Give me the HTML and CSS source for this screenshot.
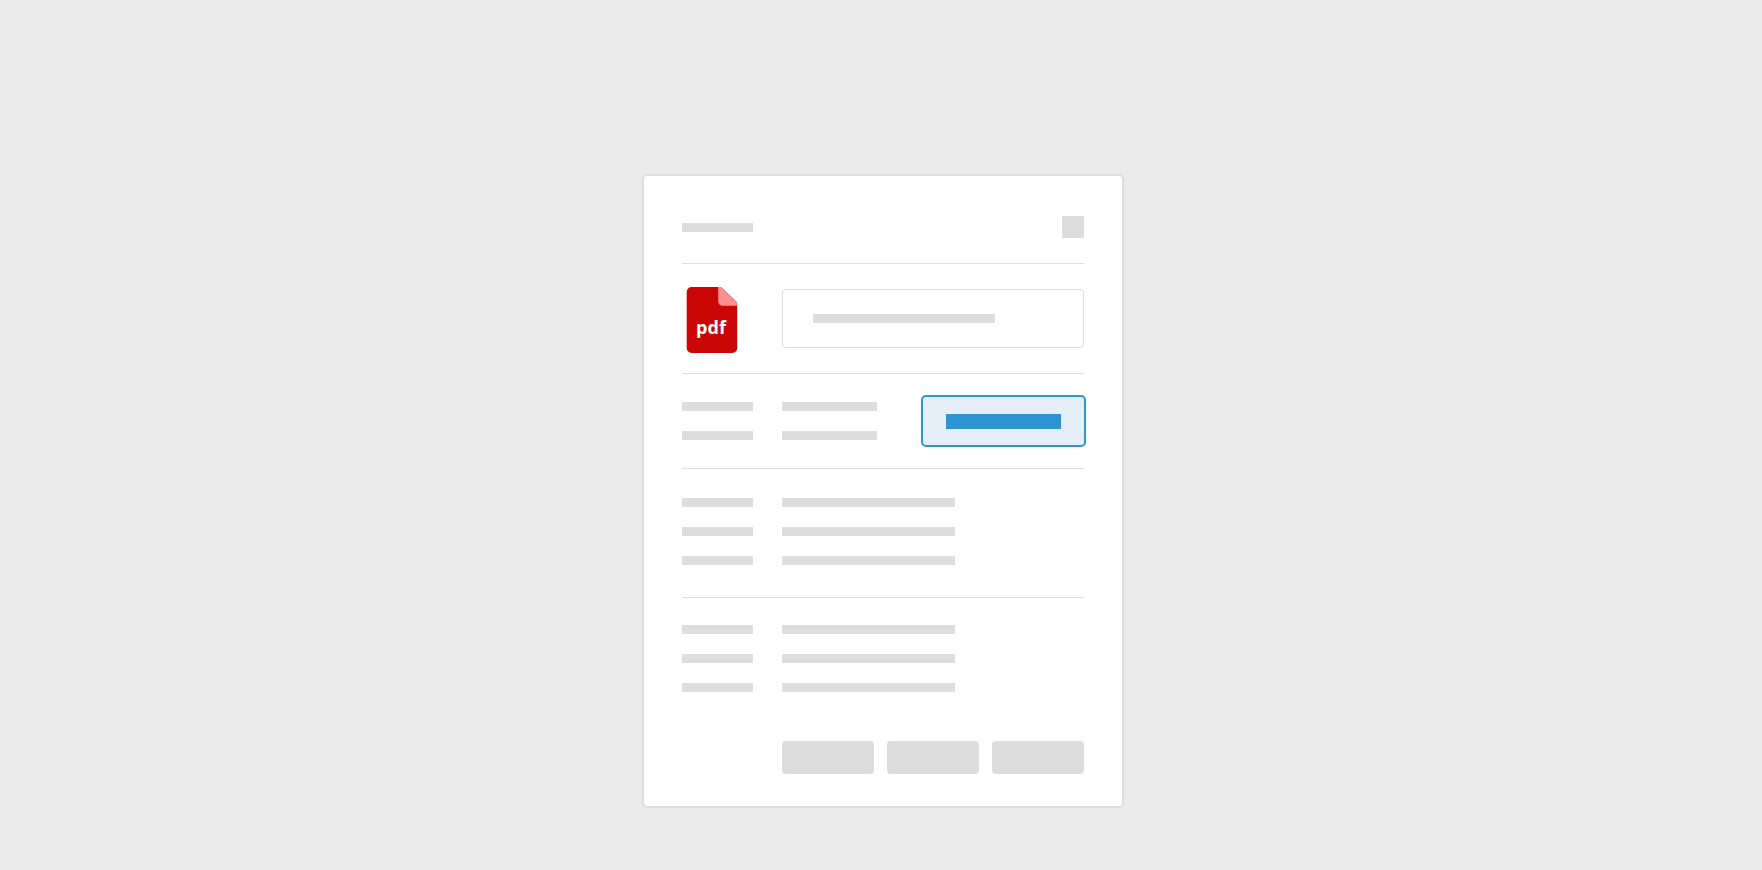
FILE: index.html
```html
<!DOCTYPE html>
<html lang="en">
<head>
<meta charset="utf-8">
<meta name="viewport" content="width=device-width, initial-scale=1">
<title>Document form</title>
<link rel="stylesheet" href="styles.css">
</head>
<body>
<main class="card">
  <header class="card-header">
    <span class="bar bar-label"></span>
    <button class="square" type="button" aria-label="Close"></button>
  </header>
  <section class="row file-row">
    <svg class="file-icon" viewBox="0 0 52 66" role="img" aria-label="pdf file">
      <path fill="#cb0606" d="M5.500 0H35L51.200 15.800V61a5 5 0 0 1-5 5H5.700a5 5 0 0 1-5-5V5A5 5 0 0 1 5.700 0Z"/>
      <path fill="#ff8e8e" d="M32.200 0H35L51.200 15.800V18.800H36.700A4.500 4.500 0 0 1 32.200 14.300Z"/>
      <path fill="none" stroke="#b98a8a" stroke-width=".8" d="M35 0 51.200 15.800"/>
      <text class="file-type" x="25" y="47" text-anchor="middle">pdf</text>
    </svg>
    <input class="field" type="text" aria-label="File name">
  </section>
  <section class="row action-row">
    <div class="bars">
      <span class="bar bar-label"></span><span class="bar bar-short"></span>
      <span class="bar bar-label"></span><span class="bar bar-short"></span>
    </div>
    <button class="primary" type="button" aria-label="Primary action"><span class="primary-bar"></span></button>
  </section>
  <section class="row details-row">
    <div class="bars">
      <span class="bar bar-label"></span><span class="bar bar-long"></span>
      <span class="bar bar-label"></span><span class="bar bar-long"></span>
      <span class="bar bar-label"></span><span class="bar bar-long"></span>
    </div>
  </section>
  <section class="row extra-row">
    <div class="bars">
      <span class="bar bar-label"></span><span class="bar bar-long"></span>
      <span class="bar bar-label"></span><span class="bar bar-long"></span>
      <span class="bar bar-label"></span><span class="bar bar-long"></span>
    </div>
  </section>
  <footer class="buttons">
    <button class="secondary" type="button" aria-label="First option"></button>
    <button class="secondary" type="button" aria-label="Second option"></button>
    <button class="secondary" type="button" aria-label="Third option"></button>
  </footer>
</main>
</body>
</html>
```

FILE: styles.css
```css
* {
  box-sizing: border-box;
}

body {
  margin: 0;
  min-height: 100vh;
  padding: 174px 0 62px 4px;
  background: #eaeaea;
  font-family: "Open Sans", "Noto Sans", sans-serif;
}

button,
input {
  margin: 0;
  padding: 0;
  border: 0;
  font: inherit;
}

.card {
  width: 100%;
  max-width: 482px;
  margin: 0 auto;
  padding: 40px 38px 32px;
  background: #fff;
  border: 2px solid #ddd;
  border-radius: 5px;
}

.card-header {
  display: flex;
  align-items: center;
  justify-content: space-between;
  padding-bottom: 25px;
}

.bar {
  height: 9px;
  background: #ddd;
}

.bar-label {
  width: 71px;
}

.bar-short {
  width: 95px;
}

.bar-long {
  width: 173px;
}

.square {
  width: 22px;
  height: 22px;
  background: #ddd;
}

.row {
  display: flex;
  align-items: flex-start;
  justify-content: space-between;
  border-top: 1px solid #ddd;
}

.bars {
  display: grid;
  grid-template-columns: 71px auto;
  gap: 20px 29px;
}

.file-row {
  gap: 44px;
  padding: 23px 0 20px 4px;
}

.file-icon {
  flex: none;
  width: 52px;
  height: 66px;
}

.file-type {
  fill: #fff;
  font-size: 18px;
  font-weight: 700;
}

.field {
  flex: 1;
  min-width: 0;
  height: 59px;
  margin-top: 2px;
  padding: 0 30px;
  border: 1px solid #ddd;
  border-radius: 4px;
  background: linear-gradient(#ddd, #ddd) 30px 24px / 182px 9px no-repeat #fff;
}

.action-row {
  padding: 21px 0;
}

.action-row .bars {
  padding-top: 7px;
}

.primary {
  display: flex;
  align-items: center;
  justify-content: center;
  width: 165px;
  height: 52px;
  margin-right: -2px;
  border: 2px solid #2e95d5;
  border-radius: 5px;
  background: #e7eff6;
}

.primary-bar {
  width: 115px;
  height: 15px;
  background: #2e95d5;
}

.details-row {
  padding: 29px 0 32px;
}

.extra-row {
  padding: 27px 0 49px;
}

.buttons {
  display: grid;
  grid-template-columns: repeat(3, 1fr);
  gap: 13px;
  padding-left: 100px;
}

.secondary {
  height: 33px;
  border-radius: 4px;
  background: #ddd;
}
```
